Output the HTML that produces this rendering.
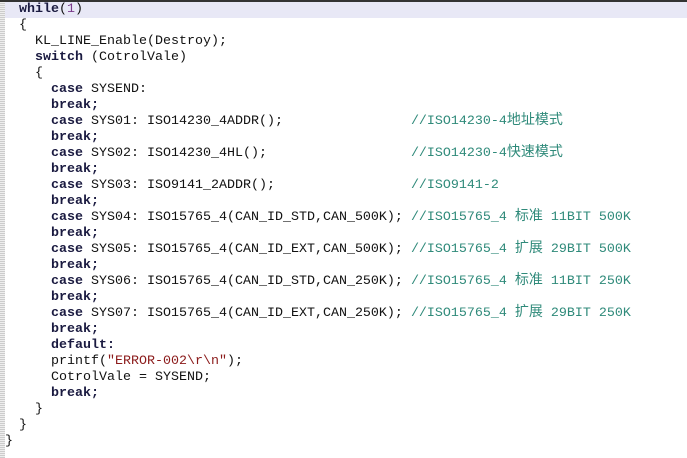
<!DOCTYPE html>
<html><head><meta charset="utf-8"><style>
html,body{margin:0;padding:0;background:#fff;width:687px;height:458px;overflow:hidden}
.top{position:absolute;left:0;top:0;width:687px;height:2px;background:#333}
.gut{position:absolute;left:0;top:2px;width:5px;height:456px;background:repeating-linear-gradient(0deg,#ccc 0 1px,#eee 1px 2px)}
.hl{position:absolute;left:5px;top:2px;width:682px;height:16px;background:#e8e8f6}
.code{position:absolute;left:19px;top:2px;font-family:"Liberation Mono","Noto Sans CJK SC",monospace;font-size:13.33px;color:#111}
.code div{height:16px;line-height:16px;white-space:pre;overflow:visible}
b{color:#1a1a40}
.c{color:#2f8a7a}
.s{color:#8b1a1a}
.n{color:#7a3a8a}
.z{font-family:"Noto Sans CJK SC",sans-serif;font-size:14px;line-height:0;vertical-align:baseline}
</style></head><body>
<div class="top"></div><div class="gut"></div><div class="hl"></div>
<div class="code">
<div><b>while</b>(<span class="n">1</span>)</div>
<div>{</div>
<div>  KL_LINE_Enable(Destroy);</div>
<div>  <b>switch</b> (CotrolVale)</div>
<div>  {</div>
<div>    <b>case</b> SYSEND:</div>
<div>    <b>break;</b></div>
<div>    <b>case</b> SYS01: ISO14230_4ADDR();                <span class="c">//ISO14230-4<span class="z">地址模式</span></span></div>
<div>    <b>break;</b></div>
<div>    <b>case</b> SYS02: ISO14230_4HL();                  <span class="c">//ISO14230-4<span class="z">快速模式</span></span></div>
<div>    <b>break;</b></div>
<div>    <b>case</b> SYS03: ISO9141_2ADDR();                 <span class="c">//ISO9141-2</span></div>
<div>    <b>break;</b></div>
<div>    <b>case</b> SYS04: ISO15765_4(CAN_ID_STD,CAN_500K); <span class="c">//ISO15765_4 <span class="z">标准</span> 11BIT 500K</span></div>
<div>    <b>break;</b></div>
<div>    <b>case</b> SYS05: ISO15765_4(CAN_ID_EXT,CAN_500K); <span class="c">//ISO15765_4 <span class="z">扩展</span> 29BIT 500K</span></div>
<div>    <b>break;</b></div>
<div>    <b>case</b> SYS06: ISO15765_4(CAN_ID_STD,CAN_250K); <span class="c">//ISO15765_4 <span class="z">标准</span> 11BIT 250K</span></div>
<div>    <b>break;</b></div>
<div>    <b>case</b> SYS07: ISO15765_4(CAN_ID_EXT,CAN_250K); <span class="c">//ISO15765_4 <span class="z">扩展</span> 29BIT 250K</span></div>
<div>    <b>break;</b></div>
<div>    <b>default:</b></div>
<div>    printf(<span class="s">"ERROR-002\r\n"</span>);</div>
<div>    CotrolVale = SYSEND;</div>
<div>    <b>break;</b></div>
<div>  }</div>
<div>}</div>
<div style="margin-left:-14px">}</div>
</div>
</body></html>
